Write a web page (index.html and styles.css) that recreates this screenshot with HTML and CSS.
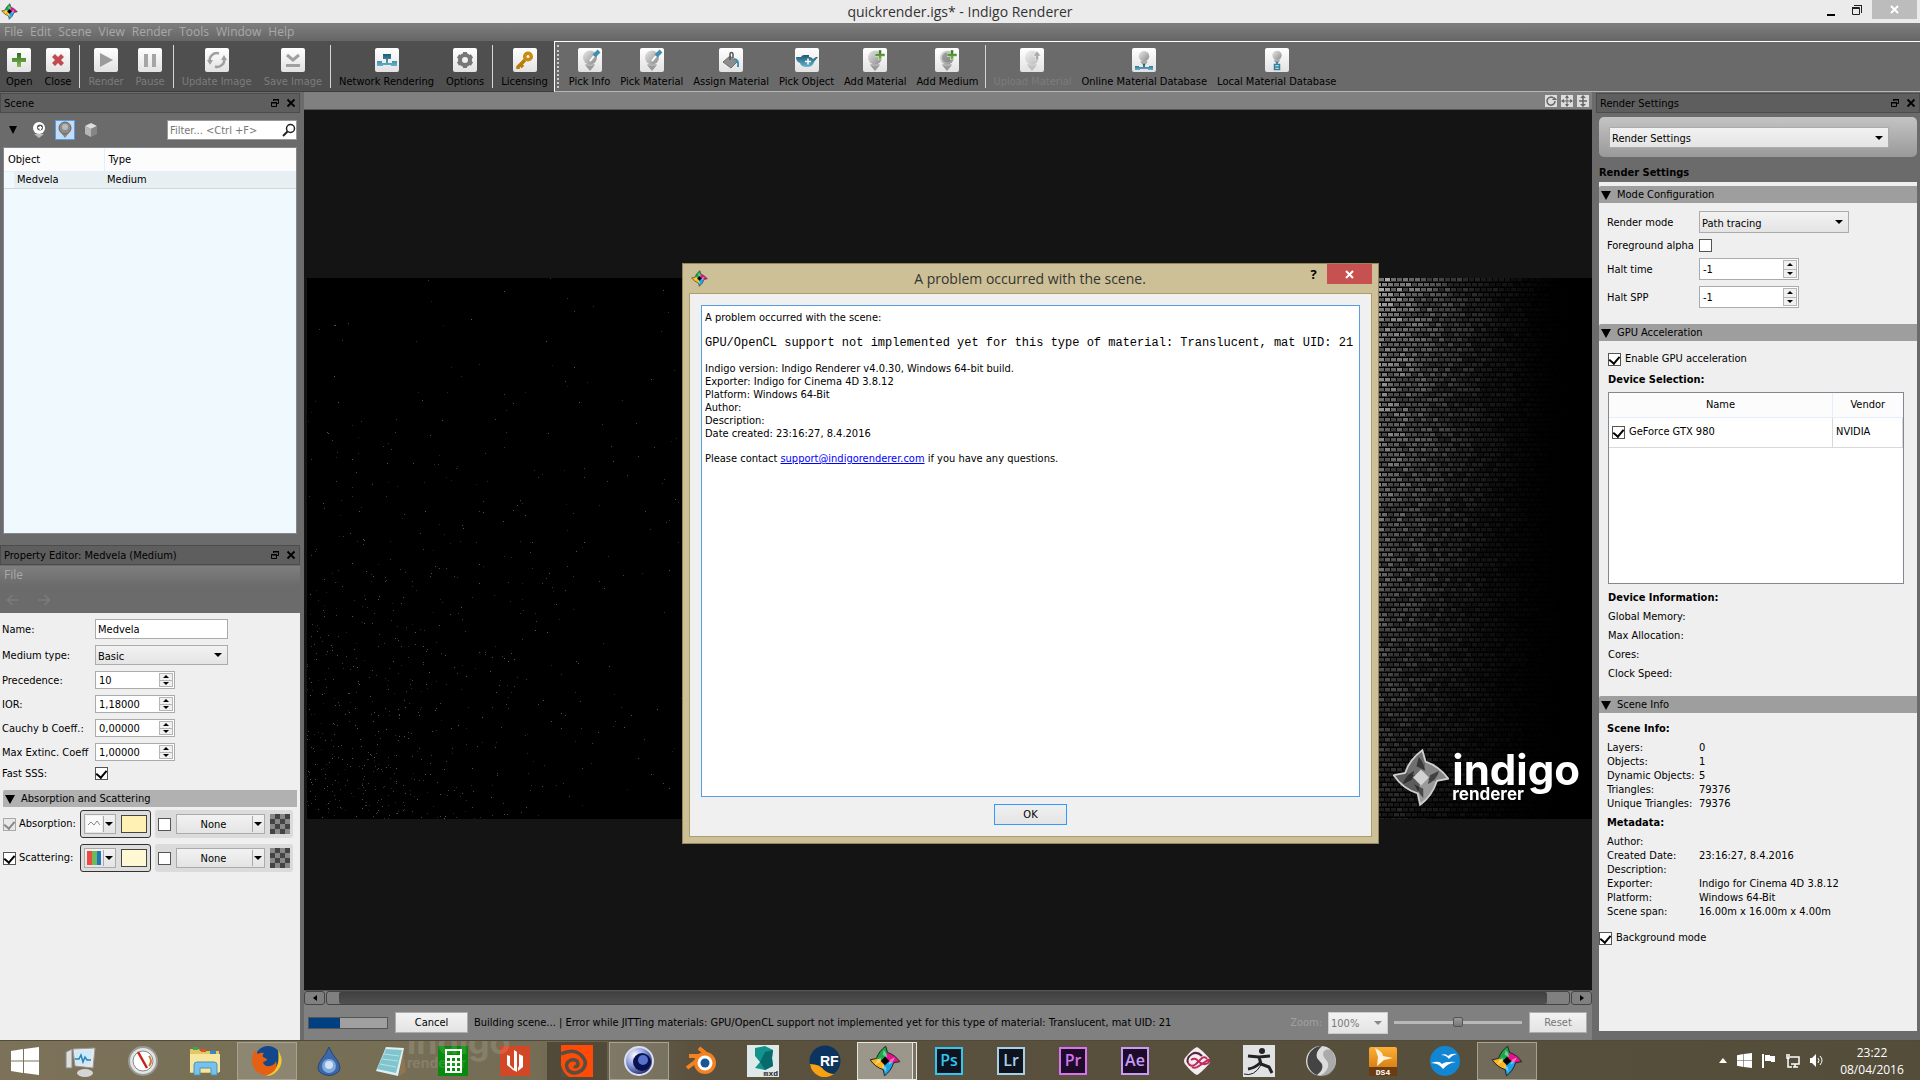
FILE: index.html
```html
<!DOCTYPE html>
<html lang="en">

<head>
    <meta charset="UTF-8" />
    <title>quickrender.igs* - Indigo Renderer</title>
    <link rel="stylesheet" href="styles.css">
</head>

<body>
    <!-- shared icons -->
    <svg class="defs" aria-hidden="true">
        <defs>
            <linearGradient id="grey" x1="0" y1="0" x2="1" y2="1">
                <stop offset="0" stop-color="#e8e8e8" />
                <stop offset="1" stop-color="#8a8a8a" />
            </linearGradient>
            <linearGradient id="blue" x1="0" y1="0" x2="0" y2="1">
                <stop offset="0" stop-color="#1f5a73" />
                <stop offset="1" stop-color="#62b4cf" />
            </linearGradient>
            <linearGradient id="green" x1="0" y1="0" x2="0" y2="1">
                <stop offset="0" stop-color="#2f6b1c" />
                <stop offset="1" stop-color="#86bd58" />
            </linearGradient>
            <linearGradient id="orange" x1="0" y1="0" x2="0" y2="1">
                <stop offset="0" stop-color="#ffae35" />
                <stop offset="1" stop-color="#c86e08" />
            </linearGradient>
            <radialGradient id="orb" cx="0.35" cy="0.3" r="0.8">
                <stop offset="0" stop-color="#ffffff" />
                <stop offset="0.5" stop-color="#7f93d8" />
                <stop offset="1" stop-color="#10144a" />
            </radialGradient>
        </defs>
        <symbol id="mark" viewBox="0 -1 24 26">
            <path class="mark-a" d="M12.6 0Q7 4 5 10L12 12 14 5Z" />
            <path class="mark-b" d="M14 5Q20 7 24 12.5L19 13.5 12 12Z" />
            <path class="mark-c" d="M19 13.500Q17 20 11.600 24L10.500 19 12 12Z" />
            <path class="mark-d" d="M10.500 19Q4 17 0 11L5 10 12 12Z" />
            <path class="mark-tip" d="M11 3Q13 5 14 9L10 7ZM20 9Q19 13 15 15L16 11ZM13 21Q11 19 9 15L13 17ZM4 15Q5 11 9 9L8 13Z" />
            <path class="mark-e" d="M12 8.500L15.500 12 12 15.500 8.500 12Z" />
            <path class="mark-line" d="M12.600 0L14 5Q20 7 24 12.500L19 13.500Q17 20 11.600 24L10.500 19Q4 17 0 11L5 10Q7 4 12.600 0Z" />
        </symbol>
        <symbol id="ball" viewBox="0 0 24 24">
            <path fill="#b5b5b5" d="M7 16h10l-5 6z" />
            <circle cx="12" cy="9.500" r="7" fill="url(#grey)" />
            <path fill="#9a9a9a" d="M7 17l3 1h4l3-1-5 6z" />
        </symbol>
        <symbol id="plus" viewBox="0 0 10 10">
            <path fill="url(#green)" stroke="#fff" stroke-width="0.500" d="M3.500 0h3v3.500H10v3H6.500V10h-3V6.500H0v-3h3.500z" />
        </symbol>
        <symbol id="win" viewBox="0 0 28 28">
            <path fill="#fff" d="M0 4l12-2v11.500H0zM13 2L28 0v13.500H13zM0 14.500h12V26L0 24zM13 14.500h15V28l-15-2z" />
        </symbol>
        <symbol id="restore" viewBox="0 0 10 10">
            <path fill="none" stroke="#000" d="M3.500 3V1.500h5v4H7M1.500 4.500h5v4h-5z" />
            <path d="M3 1h6v1.500H3zM1 4h6v1.500H1z" />
        </symbol>
        <symbol id="cross" viewBox="0 0 10 10">
            <path fill="none" stroke="#000" stroke-width="1.800" d="M1.500 1.500l7 7M8.500 1.500l-7 7" />
        </symbol>
    </svg>

    <header class="titlebar">
        <svg class="mark app-mark" width="17" height="17"><use href="#mark" /></svg>
        <h1>quickrender.igs* - Indigo Renderer</h1>
        <div class="win-buttons">
            <button aria-label="Minimize"><svg width="10" height="14"><path d="M1 11h8v2H1z" /></svg></button>
            <button aria-label="Restore"><svg width="12" height="12"><path fill="none" stroke="#222" d="M1 3.500h7.500v7H1.500v-7M1 4.500h7M3 1.500h8M10.500 1v8" /></svg></button>
            <button class="win-close" aria-label="Close"><svg width="10" height="10"><path fill="none" stroke="#fff" stroke-width="2" d="M1 1l7 7M8 1l-7 7" /></svg></button>
        </div>
    </header>

    <nav class="menubar">
        <a href="#">File</a>
        <a href="#">Edit</a>
        <a href="#">Scene</a>
        <a href="#">View</a>
        <a href="#">Render</a>
        <a href="#">Tools</a>
        <a href="#">Window</a>
        <a href="#">Help</a>
    </nav>

    <div class="toolbars">
        <div class="toolbar main-tools">
            <button class="tool">
                <svg viewBox="0 0 24 24"><path fill="url(#green)" d="M10 5h4v5h5v4h-5v5h-4v-5H5v-4h5z" /></svg>
                <span>Open</span>
            </button>
            <button class="tool">
                <svg viewBox="0 0 24 24"><path fill="#bf4a4f" d="M6 9l3-3 3 3 3-3 3 3-3 3 3 3-3 3-3-3-3 3-3-3 3-3z" /></svg>
                <span>Close</span>
            </button>
            <i class="sep"></i>
            <button class="tool" disabled>
                <svg viewBox="0 0 24 24"><path fill="#9b9b9b" d="M6 5l13 7-13 7z" /></svg>
                <span>Render</span>
            </button>
            <button class="tool" disabled>
                <svg viewBox="0 0 24 24"><path fill="#a5a5a5" d="M6 6h4v13H6zM14 6h4v13h-4z" /></svg>
                <span>Pause</span>
            </button>
            <i class="sep"></i>
            <button class="tool" disabled>
                <svg viewBox="0 0 24 24"><path fill="none" stroke="#a0a0a0" stroke-width="2.500" d="M5 14a7 7 0 0 1 9-8.500M19 10a7 7 0 0 1-9 8.500" /><path fill="#a0a0a0" d="M2 12h6l-3 5zM16 12h6l-3-5z" /></svg>
                <span>Update Image</span>
            </button>
            <button class="tool" disabled>
                <svg viewBox="0 0 24 24"><path fill="none" stroke="#a0a0a0" stroke-width="3" d="M6 7l6 5 6-5M5 17.500h14" /></svg>
                <span>Save Image</span>
            </button>
            <i class="sep"></i>
            <button class="tool">
                <svg viewBox="0 0 24 24"><path fill="url(#blue)" d="M8 6h8v5h-3v4h4v-2h5v5h-6v-1H8v1H2v-5h5v2h4v-4H8z" /></svg>
                <span>Network Rendering</span>
            </button>
            <button class="tool">
                <svg viewBox="0 0 24 24"><circle cx="12" cy="12" r="5" fill="none" stroke="#777" stroke-width="4" /><path stroke="#777" stroke-width="4" d="M12 4v3M12 17v3M5 8l3 2M16 14l3 2M5 16l3-2M16 10l3-2" /></svg>
                <span>Options</span>
            </button>
            <i class="sep"></i>
            <button class="tool">
                <svg viewBox="0 0 24 24"><path fill="none" stroke="#b87c07" stroke-width="3.500" d="M12 12L5 19v2M8 17l2 2" /><circle cx="15" cy="8.500" r="3.300" fill="none" stroke="#c98b12" stroke-width="3.500" /></svg>
                <span>Licensing</span>
            </button>
        </div>
        <div class="toolbar material-tools">
            <i class="grip"></i>
            <button class="tool">
                <svg viewBox="0 0 24 24"><use href="#ball" /><path stroke="#3f8fae" stroke-width="4" d="M16 8l5-5" /><path stroke="#fff" stroke-width="2" d="M12 13l4-5" /></svg>
                <span>Pick Info</span>
            </button>
            <button class="tool">
                <svg viewBox="0 0 24 24"><use href="#ball" /><path stroke="#3f8fae" stroke-width="4" d="M16 8l5-5" /><path stroke="#fff" stroke-width="2" d="M12 13l4-5" /></svg>
                <span>Pick Material</span>
            </button>
            <button class="tool">
                <svg viewBox="0 0 24 24"><path fill="#8d8d8d" stroke="#6f6f6f" d="M11 8l7 6-6 6-8-6z" /><path fill="none" stroke="#555" stroke-width="1.500" d="M11 12V6a1.500 1.500 0 0 1 3 0v4" /><path fill="none" stroke="#3f8fae" stroke-width="2" d="M15 11q5 0 4 8" /></svg>
                <span>Assign Material</span>
            </button>
            <button class="tool">
                <svg viewBox="0 0 24 24"><path fill="url(#blue)" d="M9 7h5v2q3 0 4 2l3-2h2l-4 5q-1 5-7 5-6 0-7-4-4-1-4-6h5q1-2 3-2z" /><path stroke="#fff" stroke-width="1.500" d="M10 13.500h6M13 10.500v6" /></svg>
                <span>Pick Object</span>
            </button>
            <button class="tool">
                <svg viewBox="0 0 24 24"><use href="#ball" /><use href="#plus" x="12" y="2" width="10" height="10" /></svg>
                <span>Add Material</span>
            </button>
            <button class="tool">
                <svg viewBox="0 0 24 24"><use href="#ball" /><circle cx="12" cy="9.500" r="5" fill="#7b7b7b" opacity="0.600" /><use href="#plus" x="12" y="2" width="10" height="10" /></svg>
                <span>Add Medium</span>
            </button>
            <i class="sep"></i>
            <button class="tool" disabled>
                <svg viewBox="0 0 24 24"><use href="#ball" opacity="0.500" /><path fill="#aaa" stroke="#fff" stroke-width="0.500" d="M17 3l4 5h-2.500v4h-3V8H13z" /></svg>
                <span>Upload Material</span>
            </button>
            <button class="tool">
                <svg viewBox="0 0 24 24"><use href="#ball" x="3" y="1" width="18" height="18" /><path fill="url(#blue)" d="M11 16h2v3h4v-1h4v4h-5v-1H8v1H3v-4h4v1h4z" /></svg>
                <span>Online Material Database</span>
            </button>
            <button class="tool">
                <svg viewBox="0 0 24 24"><use href="#ball" x="4" y="1" width="16" height="16" /><path fill="none" stroke="#2f829f" stroke-width="1.500" d="M12 14v2M9.500 16.500h5v5h-5zM9.500 19h5" /></svg>
                <span>Local Material Database</span>
            </button>
        </div>
    </div>

    <main class="workspace">
        <aside class="dock left-dock">
            <section class="scene-panel">
                <div class="dock-title">
                    <h2>Scene</h2>
                    <button aria-label="Float"><svg width="10" height="10"><use href="#restore" /></svg></button>
                    <button aria-label="Close"><svg width="10" height="10"><use href="#cross" /></svg></button>
                </div>
                <div class="scene-tools">
                    <button aria-label="Expand"><svg width="8" height="8"><path d="M0 0h8L4 8z" /></svg></button>
                    <button aria-label="Materials"><svg width="18" height="18" viewBox="0 0 18 18"><path fill="#bbb" d="M4 13h10l-5 4z" /><circle cx="9" cy="7" r="6" fill="#fff" /><circle cx="10" cy="6.500" r="3" fill="#555" /><path fill="#fff" d="M9.500 5h1.500v4H9.500zM8 6h4v1.500H8z" /></svg></button>
                    <button class="on" aria-label="Media"><svg width="18" height="18" viewBox="0 0 18 18"><path fill="#888" d="M3 9h12l-6 8z" /><circle cx="9" cy="7" r="6" fill="#8d8d8d" stroke="#666" /><circle cx="9" cy="6" r="3" fill="#bbb" /></svg></button>
                    <button aria-label="Objects"><svg width="18" height="18" viewBox="0 0 18 18"><path fill="#ddd" d="M3 5l6-3 6 3-6 3z" /><path fill="#b5b5b5" d="M3 5l6 3v8l-6-3z" /><path fill="#858585" d="M15 5L9 8v8l6-3z" /></svg></button>
                    <label class="filter">
                        <input type="text" placeholder="Filter... &lt;Ctrl +F&gt;" aria-label="Filter" />
                        <svg width="14" height="14" viewBox="0 0 14 14"><circle cx="8.500" cy="5.500" r="4" fill="none" stroke="#222" stroke-width="1.500" /><path stroke="#222" stroke-width="2" d="M5.500 8.500L1 13" /></svg>
                    </label>
                </div>
                <div class="tree">
                    <table>
                        <thead>
                            <tr><th>Object</th><th>Type</th></tr>
                        </thead>
                        <tbody>
                            <tr><td>Medvela</td><td>Medium</td></tr>
                        </tbody>
                    </table>
                </div>
            </section>

            <section class="property-panel">
                <div class="dock-title">
                    <h2>Property Editor: Medvela (Medium)</h2>
                    <button aria-label="Float"><svg width="10" height="10"><use href="#restore" /></svg></button>
                    <button aria-label="Close"><svg width="10" height="10"><use href="#cross" /></svg></button>
                </div>
                <div class="property-menu"><a href="#">File</a></div>
                <div class="history">
                    <button aria-label="Back" disabled><svg width="13" height="12"><path fill="none" stroke="#7c7c7c" stroke-width="1.500" d="M13 6H1.500M6.500 1l-5 5 5 5" /></svg></button>
                    <button aria-label="Forward" disabled><svg width="13" height="12"><path fill="none" stroke="#7c7c7c" stroke-width="1.500" d="M0 6h11.500M6.500 1l5 5-5 5" /></svg></button>
                </div>
                <div class="property-body">
                    <div class="property-form">
                        <label for="name">Name:</label>
                        <input id="name" class="field wide" type="text" value="Medvela" />
                        <label for="medium-type">Medium type:</label>
                        <span class="select wide"><select id="medium-type"><option>Basic</option></select></span>
                        <label for="precedence">Precedence:</label>
                        <span class="spin"><input id="precedence" type="text" value="10" /><span><button aria-label="Up"></button><button aria-label="Down"></button></span></span>
                        <label for="ior">IOR:</label>
                        <span class="spin"><input id="ior" type="text" value="1,18000" /><span><button aria-label="Up"></button><button aria-label="Down"></button></span></span>
                        <label for="cauchy">Cauchy b Coeff.:</label>
                        <span class="spin"><input id="cauchy" type="text" value="0,00000" /><span><button aria-label="Up"></button><button aria-label="Down"></button></span></span>
                        <label for="extinction">Max Extinc. Coeff</label>
                        <span class="spin"><input id="extinction" type="text" value="1,00000" /><span><button aria-label="Up"></button><button aria-label="Down"></button></span></span>
                        <label for="fast-sss">Fast SSS:</label>
                        <input id="fast-sss" type="checkbox" checked />
                    </div>
                    <h3 class="group-title">Absorption and Scattering</h3>
                    <div class="channel">
                        <label><input type="checkbox" checked disabled />Absorption:</label>
                        <div class="colour-box">
                            <button class="split" aria-label="Spectrum type"><svg width="16" height="16"><rect width="16" height="16" fill="#fafafa" /><path fill="none" stroke="#888" d="M2 9l3-3 3 3 3-4 3 4" /></svg></button>
                            <button class="swatch absorption" aria-label="Colour"></button>
                        </div>
                        <div class="texture-box">
                            <input type="checkbox" aria-label="Use texture" />
                            <button class="split none">None</button>
                            <span class="checker"></span>
                        </div>
                    </div>
                    <div class="channel">
                        <label><input type="checkbox" checked />Scattering:</label>
                        <div class="colour-box">
                            <button class="split" aria-label="Spectrum type"><svg width="16" height="16"><path fill="#ee4b40" d="M1 1h5v14H1z" /><path fill="#6dbb58" d="M6 1h5v14H6z" /><path fill="#1f76bd" d="M11 1h4v14h-4z" /></svg></button>
                            <button class="swatch scattering" aria-label="Colour"></button>
                        </div>
                        <div class="texture-box">
                            <input type="checkbox" aria-label="Use texture" />
                            <button class="split none">None</button>
                            <span class="checker"></span>
                        </div>
                    </div>
                </div>
            </section>
        </aside>

        <section class="center">
            <div class="view-bar">
                <button aria-label="Rotate"><svg width="12" height="12"><path fill="none" stroke="#666" stroke-width="1.500" d="M8.500 3A4 4 0 1 0 10 6" /><path fill="#666" d="M7 5h5L9.500 2z" /></svg></button>
                <button aria-label="Pan"><svg width="12" height="12"><path stroke="#666" d="M6 1v10M1 6h10" /><path fill="#666" d="M6 0l2 3H4zM6 12l2-3H4zM0 6l3-2v4zM12 6L9 4v4z" /></svg></button>
                <button aria-label="Dolly"><svg width="12" height="12"><path stroke="#666" stroke-width="1.500" d="M6 1v10M2 6h8" /><path fill="#666" d="M6 0l3 3H3zM6 12l3-3H3z" /></svg></button>
            </div>
            <div class="viewport">
                <div class="render">
                    <canvas id="render"></canvas>
                    <div class="watermark">
                        <svg class="mark mark-grey" width="56" height="59"><use href="#mark" /></svg>
                        <p>indigo<small>renderer</small></p>
                    </div>
                </div>
            </div>
            <div class="scrollbar">
                <button class="scroll-left" aria-label="Scroll left"></button>
                <div class="track"><div class="handle"></div></div>
                <button class="scroll-right" aria-label="Scroll right"></button>
            </div>
            <div class="statusbar">
                <div class="progress"><div class="progress-fill"></div></div>
                <button class="btn cancel">Cancel</button>
                <p>Building scene... | Error while JITTing materials: GPU/OpenCL support not implemented yet for this type of material: Translucent, mat UID: 21</p>
                <label class="zoom-label" for="zoom">Zoom:</label>
                <span class="select zoom"><select id="zoom" disabled><option>100%</option></select></span>
                <input class="slider" type="range" value="50" aria-label="Zoom" />
                <button class="btn reset" disabled>Reset</button>
            </div>
        </section>

        <aside class="dock right-dock">
            <div class="dock-title">
                <h2>Render Settings</h2>
                <button aria-label="Float"><svg width="10" height="10"><use href="#restore" /></svg></button>
                <button aria-label="Close"><svg width="10" height="10"><use href="#cross" /></svg></button>
            </div>
            <div class="picker">
                <span class="select"><select aria-label="Settings page"><option>Render Settings</option></select></span>
            </div>
            <h2 class="page-title">Render Settings</h2>
            <div class="settings">
                <h3 class="group-title">Mode Configuration</h3>
                <div class="mode-form">
                    <label for="mode">Render mode</label>
                    <span class="select mode"><select id="mode"><option>Path tracing</option></select></span>
                    <label for="alpha">Foreground alpha</label>
                    <input id="alpha" type="checkbox" />
                    <label for="halt-time">Halt time</label>
                    <span class="spin tall"><input id="halt-time" type="text" value="-1" /><span><button aria-label="Up"></button><button aria-label="Down"></button></span></span>
                    <label for="halt-spp">Halt SPP</label>
                    <span class="spin tall"><input id="halt-spp" type="text" value="-1" /><span><button aria-label="Up"></button><button aria-label="Down"></button></span></span>
                </div>

                <h3 class="group-title">GPU Acceleration</h3>
                <div class="gpu">
                    <label class="check"><input type="checkbox" checked />Enable GPU acceleration</label>
                    <h4>Device Selection:</h4>
                    <div class="devices">
                        <table>
                            <thead>
                                <tr><th>Name</th><th>Vendor</th></tr>
                            </thead>
                            <tbody>
                                <tr>
                                    <td><label class="check"><input type="checkbox" checked />GeForce GTX 980</label></td>
                                    <td>NVIDIA</td>
                                </tr>
                            </tbody>
                        </table>
                    </div>
                    <h4>Device Information:</h4>
                    <ul>
                        <li>Global Memory:</li>
                        <li>Max Allocation:</li>
                        <li>Cores:</li>
                        <li>Clock Speed:</li>
                    </ul>
                </div>

                <h3 class="group-title">Scene Info</h3>
                <div class="info">
                    <h4>Scene Info:</h4>
                    <dl>
                        <dt>Layers:</dt><dd>0</dd>
                        <dt>Objects:</dt><dd>1</dd>
                        <dt>Dynamic Objects:</dt><dd>5</dd>
                        <dt>Triangles:</dt><dd>79376</dd>
                        <dt>Unique Triangles:</dt><dd>79376</dd>
                    </dl>
                    <h4>Metadata:</h4>
                    <dl>
                        <dt>Author:</dt><dd></dd>
                        <dt>Created Date:</dt><dd>23:16:27, 8.4.2016</dd>
                        <dt>Description:</dt><dd></dd>
                        <dt>Exporter:</dt><dd>Indigo for Cinema 4D 3.8.12</dd>
                        <dt>Platform:</dt><dd>Windows 64-Bit</dd>
                        <dt>Scene span:</dt><dd>16.00m x 16.00m x 4.00m</dd>
                    </dl>
                </div>
                <label class="check background"><input type="checkbox" checked />Background mode</label>
            </div>
        </aside>
    </main>

    <footer class="taskbar">
        <div class="see-through" aria-hidden="true">indigo<small>renderer</small></div>
        <button class="start" aria-label="Start"><svg width="28" height="28"><use href="#win" /></svg></button>
        <div class="tasks">
            <button aria-label="Task Manager"><svg viewBox="0 0 32 32"><path fill="#ddd" stroke="#888" d="M1 7l6-3v19H1z" /><path fill="#e8e8e8" stroke="#999" d="M8 4l22-1-2 20-18-2z" /><path fill="#cfe9f8" d="M10 6l17-1-2 15-14-1z" /><path fill="none" stroke="#2783b8" stroke-width="1.500" d="M10 14h4l2-4 2 7 2-5 2 3h4" /><ellipse cx="20" cy="28" rx="8" ry="4" fill="#d5d5d5" /></svg></button>
            <button aria-label="Gauge"><svg viewBox="0 0 32 32"><circle cx="16" cy="16" r="14" fill="#e4e4e2" stroke="#999" stroke-width="2" /><circle cx="16" cy="16" r="10" fill="#fff" stroke="#888" /><path stroke="#c4231a" stroke-width="2.500" d="M11 7l9 16" /><path fill="none" stroke="#c77b37" stroke-width="2" d="M22 11q4 5 0 10" /></svg></button>
            <button aria-label="File Explorer"><svg viewBox="0 0 32 32"><path fill="#e6c661" d="M1 4h9l1 2h19v22H1z" /><path fill="#f7e6a0" d="M1 9h30v18H1z" /><path fill="#3aa657" d="M4 2h5v3H4z" /><path fill="#d9532c" d="M12 4h5v3h-5z" /><path fill="#3488cf" d="M21 6h6v3h-6z" /><path fill="#79c1e8" stroke="#4594c4" d="M5 30V20q0-3 3-3h17q3 0 3 3v10h-6v-7H11v7z" /></svg></button>
            <button class="open" aria-label="Firefox"><svg viewBox="0 0 32 32"><circle cx="17" cy="14" r="13" fill="#12478c" /><path fill="#f4c828" d="M27 5q6 9 2 17-5 9-14 9 10-5 12-13 1-7 0-13z" /><path fill="#e66014" d="M4 5l3 4q3-2 6-1-2 2-1 4l4 2q0 2-4 3 1 5 7 4 5-1 6-5 2 7-3 11-6 5-13 2-7-4-8-12Q1 9 4 5z" /></svg></button>
            <button aria-label="Drop"><svg viewBox="0 0 32 32"><path fill="#3c68a8" stroke="#24477c" d="M16 2q3 7 8 13 6 9 0 13-8 5-16 0-6-4 0-13 5-6 8-13z" /><circle cx="16" cy="21" r="7" fill="#80aade" /><circle cx="16" cy="20" r="4" fill="#d1e2f5" /></svg></button>
            <button aria-label="Notepad"><svg viewBox="0 0 32 32"><path fill="#8d7650" d="M28 4l3 23-7 4z" /><path fill="#dff0f2" d="M11 2l18 1-6 28L1 26z" /><path fill="#80c5cd" d="M11 4l16 1-6 23L2 24z" /><path stroke="#b5e2e6" d="M9 9l15 2M7 14l16 2M5 19l16 3" /></svg></button>
            <button aria-label="Calculator"><svg viewBox="0 0 32 32"><path fill="#078b0c" d="M1 1h30v30H1z" /><path fill="#fff" d="M8 4h17v24H8z" /><path fill="#078b0c" d="M10 6h13v4H10zM10 13h3v3h-3zM15 13h3v3h-3zM20 13h3v3h-3zM10 18h3v3h-3zM15 18h3v3h-3zM20 18h3v3h-3zM10 23h3v3h-3zM15 23h3v3h-3zM20 23h3v3h-3z" /></svg></button>
            <button aria-label="Reader"><svg viewBox="0 0 32 32"><path fill="#d24726" d="M1 1h30v30H1z" /><path fill="#fff" d="M8 10l3 1v9l4 4V5l3 2v20l-4-2-6-5zM20 9l4 2v11l-5 4v-3l1-2z" /></svg></button>
            <button class="shade" aria-label="Houdini"><svg viewBox="0 0 32 32"><path fill="#ff4a08" d="M0 0h32v32H0z" /><path fill="none" stroke="#544f40" stroke-width="3.500" d="M0 9q12-6 20 1 8 8 1 15-8 6-14 0-4-7 3-10 7-1 7 4-1 4-4 2" /><path fill="#544f40" d="M0 20q2 8 8 12H0z" /></svg></button>
            <button class="open" aria-label="Cinema 4D"><svg viewBox="0 0 32 32"><circle cx="16" cy="16" r="14" fill="url(#orb)" stroke="#dcdff0" stroke-width="2" /><circle cx="19" cy="17" r="9" fill="#0b1250" /><circle cx="20" cy="15" r="5" fill="#5871cc" /></svg></button>
            <button aria-label="Blender"><svg viewBox="0 0 32 32"><path fill="none" stroke="#f58220" stroke-width="4" d="M14 3l11 9M4 11h16M2 23l12-9" /><circle cx="20" cy="18" r="11" fill="#f58220" /><circle cx="20" cy="18" r="7.500" fill="#fff" /><circle cx="20" cy="18" r="4.500" fill="#1a5694" /></svg></button>
            <button aria-label="Max"><svg viewBox="0 0 32 32"><path fill="#dfe9ea" d="M0 0h32v32H0z" /><path fill="#12948c" d="M8 3l10-2 8 4-1 8 1 8-8 4-10-2 5-6-5-6z" /><path fill="#076a6b" d="M18 7l8-2-1 8 1 8-8 4-5-8z" /><text x="31" y="31" text-anchor="end" class="icon-tiny">mxd</text></svg></button>
            <button aria-label="RealFlow"><svg viewBox="0 0 32 32"><circle cx="16" cy="16" r="15.500" fill="#0b355f" /><path fill="#f9a110" d="M1 19q10 0 14 6 5 4 10 4-7 5-15 2-8-4-9-12z" /><text x="11" y="21" class="icon-rf">RF</text></svg></button>
            <button class="active" aria-label="Indigo Renderer"><svg class="mark"><use href="#mark" /></svg></button>
            <button class="adobe ps" aria-label="Photoshop"><b>Ps</b></button>
            <button class="adobe lr" aria-label="Lightroom"><b>Lr</b></button>
            <button class="adobe pr" aria-label="Premiere"><b>Pr</b></button>
            <button class="adobe ae" aria-label="After Effects"><b>Ae</b></button>
            <button aria-label="Knot"><svg viewBox="0 0 32 32"><path fill="#f2eeee" d="M16 2q4 2 12 11 2 3 0 6-8 9-12 11-5-2-12-11-2-3 0-6 7-9 12-11z" /><path fill="none" stroke="#5b2545" stroke-width="2" d="M21 11q-5-5-10-2-6 4-4 9" /><path fill="none" stroke="#c02a5c" stroke-width="2" d="M7 18q3 5 8 1l6-6q3-2 5 1M10 15q4-3 7 1 5 5 10 2 3-4 0-3l-9 6q-4 3-7 1" /></svg></button>
            <button aria-label="ZBrush"><svg viewBox="0 0 32 32"><path fill="#e1e2e4" d="M0 0h32v32H0z" /><circle cx="19" cy="6" r="3" fill="#222" /><path fill="none" stroke="#222" stroke-width="3" d="M5 11l11 1 11-1M16 12l2 7 8 3 3 6M17 18q-5 5-12 6" /><path fill="none" stroke="#222" d="M1 29q10 3 17-9" /></svg></button>
            <button aria-label="Silo"><svg viewBox="0 0 32 32"><circle cx="16" cy="16" r="15" fill="#dcdcdc" /><path fill="#444" d="M17 1A15 15 0 0 0 12 30q7-5 5-11l-5-6q-2-6 5-12z" /><path fill="#777" d="M26 5q-7-2-8 4 0 3 4 7 3 5-1 10-3 4-7 5 8 2 13-4 8-10-1-22z" opacity="0.500" /></svg></button>
            <button aria-label="Daz Studio"><svg viewBox="0 0 32 32"><rect x="2" y="2" width="28" height="29" rx="2" fill="url(#orange)" /><path fill="#6b3c10" d="M2 22h28v9H2z" /><path fill="#fff3dc" d="M8 3q8 4 8 8l10 2-9 2-7 6 1-9z" /><text x="16" y="30" text-anchor="middle" class="icon-tiny light">DS4</text></svg></button>
            <button aria-label="OpenOffice"><svg viewBox="0 0 32 32"><circle cx="16" cy="16" r="15" fill="#1286d2" /><path fill="#fff" d="M12 10q5-2 7 1 3-3 9-2-5 1-8 5-3-4-8-4zM2 18q8-3 11 1 4-3 14-2-8 1-13 7-4-6-12-6z" /></svg></button>
            <button class="open" aria-label="Indigo Renderer"><svg class="mark"><use href="#mark" /></svg></button>
        </div>
        <div class="tray">
            <svg width="9" height="5"><path fill="#fff" d="M0 5h8L4 0z" /></svg>
            <svg width="15" height="15"><use href="#win" /></svg>
            <svg width="15" height="15"><path fill="#fff" d="M1 1h2v14H1zM4 2h5v1h5v6h-4V8H4z" /></svg>
            <svg width="15" height="15"><path fill="none" stroke="#fff" stroke-width="1.500" d="M5 4h9v7H6M8 14h5M10 11v3M2 1v4h2V1M3 5v9h4" /></svg>
            <svg width="15" height="15"><path fill="#fff" d="M1 5h2l4-4v13l-4-4H1z" /><path fill="none" stroke="#fff" d="M9 5q2 2 0 5M11 3q4 4 0 9" /></svg>
        </div>
        <time class="clock">23:22<br />08/04/2016</time>
    </footer>

    <!-- error window -->
    <div class="dialog" role="dialog" aria-labelledby="dialog-title">
        <div class="dialog-title">
            <svg class="mark" width="17" height="17"><use href="#mark" /></svg>
            <h2 id="dialog-title">A problem occurred with the scene.</h2>
            <button class="help">?</button>
            <button class="close" aria-label="Close"><svg width="9" height="9"><path fill="none" stroke="#fff" stroke-width="2" d="M1 1l7 7M8 1L1 8" /></svg></button>
        </div>
        <div class="dialog-body">
            <div class="message">
                <p>A problem occurred with the scene:</p>
                <pre>GPU/OpenCL support not implemented yet for this type of material: Translucent, mat UID: 21</pre>
                <p>Indigo version: Indigo Renderer v4.0.30, Windows 64-bit build.<br />
                    Exporter: Indigo for Cinema 4D 3.8.12<br />
                    Platform: Windows 64-Bit<br />
                    Author:<br />
                    Description:<br />
                    Date created: 23:16:27, 8.4.2016</p>
                <p>Please contact <a href="mailto:support@indigorenderer.com">support@indigorenderer.com</a> if you have any questions.</p>
            </div>
            <button class="ok">OK</button>
        </div>
    </div>

    <script src="render.js"></script>
</body>

</html>
```
FILE: styles.css
```css
* {
    box-sizing: border-box;
    margin: 0;
    padding: 0;
}

body {
    display: flex;
    flex-direction: column;
    height: 100vh;
    overflow: hidden;
    background-color: #6b6b6b;
    color: #000;
    font: 11px/14px Tahoma, "DejaVu Sans Condensed", "Noto Sans", sans-serif;
}

button,
input,
select {
    border: none;
    background: none;
    color: inherit;
    font: inherit;
}

ul {
    list-style: none;
}

a {
    color: inherit;
    text-decoration: none;
}

svg {
    display: block;
    flex: none;
}

.defs {
    position: absolute;
    width: 0;
    height: 0;
}

/* indigo logo colours */
.mark {
    --a: #18a84a;
    --b: #e5128d;
    --c: #1aa5e8;
    --d: #f9b41c;
    --e: #000;
    --tip: rgba(255, 255, 255, 0.4);
    --line: #222;
}

.mark-grey {
    --a: #6f6f6f;
    --b: #858585;
    --c: #9a9a9a;
    --d: #5c5c5c;
    --e: #d2d2d2;
    --tip: rgba(20, 20, 20, 0.6);
    --line: #cfcfcf;
}

.mark-a { fill: var(--a); }
.mark-b { fill: var(--b); }
.mark-c { fill: var(--c); }
.mark-d { fill: var(--d); }
.mark-e { fill: var(--e); }
.mark-tip { fill: var(--tip); }
.mark-line { fill: none; stroke: var(--line); stroke-width: 0.8; }

/* title bar */
.titlebar {
    position: relative;
    display: flex;
    align-items: center;
    height: 23px;
    padding-left: 1px;
    background-color: #ebebeb;
}

.titlebar h1 {
    flex: 1;
    padding-left: 84px;
    color: #333;
    font: 14px/22px "Open Sans", sans-serif;
    text-align: center;
}

.win-buttons {
    display: flex;
    align-self: flex-start;
    padding-right: 3px;
}

.win-buttons button {
    display: flex;
    justify-content: center;
    align-items: center;
    width: 26px;
    height: 19px;
}

.win-buttons .win-close {
    width: 45px;
    margin-left: 2px;
    background-color: #bcbcbc;
}

.menubar {
    display: flex;
    gap: 7px;
    height: 18px;
    padding-left: 4px;
    background: linear-gradient(#7e7e7e, #666);
    color: #a9a9a9;
    font: 12px/18px "Open Sans", sans-serif;
}

/* toolbars */
.toolbars {
    display: flex;
    height: 51px;
}

.toolbar {
    display: flex;
    padding-top: 7px;
}

.main-tools {
    background-color: #4f4f4f;
    border-bottom: 1px solid #3c3c3c;
}

.material-tools {
    flex: 1;
    padding-top: 6px;
    border: 1px solid #fff;
    border-width: 1px 0 1px 1px;
    border-bottom-color: #b5b5b5;
    background-color: #6a6a6a;
}

.tool {
    display: flex;
    flex-direction: column;
    align-items: center;
    padding: 0 6px;
    white-space: nowrap;
}

.material-tools .tool {
    padding: 0 5px;
}

.tool svg {
    width: 24px;
    height: 24px;
    border-radius: 2px;
    background: linear-gradient(#fff, #e2e2e2);
}

.tool span {
    padding-top: 3px;
}

.tool:disabled {
    color: #7c7c7c;
}

.sep {
    width: 1px;
    height: 43px;
    margin: -3px 2px 0;
    background-color: #d5d5d5;
}

.grip {
    width: 2px;
    height: 43px;
    margin: -3px 5px 0 2px;
    border-left: 2px dotted #ccc;
}

/* docks */
.workspace {
    display: flex;
    flex: 1;
    min-height: 0;
}

.dock {
    display: flex;
    flex: none;
    flex-direction: column;
    padding-top: 1px;
    background-color: #6b6b6b;
}

.left-dock {
    width: 304px;
    padding-right: 4px;
}

.right-dock {
    width: 328px;
    padding-left: 4px;
    padding-bottom: 9px;
}

.dock-title {
    display: flex;
    align-items: center;
    gap: 6px;
    height: 20px;
    padding: 0 3px;
    border: 1px solid #4c4c4c;
    background-color: #5e5e5e;
}

.dock-title h2 {
    flex: 1;
    padding-top: 2px;
    font-size: 11px;
    font-weight: normal;
}

.scene-panel {
    display: flex;
    flex-direction: column;
    height: 452px;
}

.scene-tools {
    display: flex;
    align-items: center;
    gap: 8px;
    height: 34px;
    padding: 0 3px 0 9px;
}

.scene-tools button:nth-child(2) {
    margin-left: 5px;
}

.scene-tools .on {
    outline: 1px solid #569de5;
    background-color: #c4dcf5;
}

.filter {
    display: flex;
    align-items: center;
    width: 130px;
    height: 20px;
    margin-left: auto;
    padding: 0 2px;
    border: 1px solid #999;
    background-color: #fff;
}

.filter input {
    width: 112px;
    padding-top: 1px;
}

.filter input::placeholder {
    color: #777;
}

.tree {
    flex: 1;
    margin: 0 3px 11px;
    border: 1px solid #828790;
    background-color: #f0f9fe;
}

table {
    width: 100%;
    border-collapse: collapse;
    table-layout: fixed;
}

th {
    padding-top: 1px;
    font-weight: normal;
    background-color: #fcfcfc;
    border: 1px solid #e6eefb;
    border-width: 0 0 1px 1px;
}

th:first-child {
    border-left: none;
}

.tree th {
    height: 23px;
    padding-left: 4px;
    text-align: left;
}

.tree th:first-child {
    width: 100px;
}

.tree td {
    height: 17px;
    padding-left: 3px;
    background-color: #e8eff2;
    border: 1px solid #d0d8dc;
    border-width: 1px 0;
}

.tree td:first-child {
    padding-left: 13px;
    background: linear-gradient(to right, #f0f9fe 10px, #e8eff2 10px);
}

.property-panel {
    display: flex;
    flex: 1;
    flex-direction: column;
}

.property-menu {
    height: 20px;
    margin-top: 1px;
    padding-left: 4px;
    background: linear-gradient(#7e7e7e, #6b6b6b);
    color: #a9a9a9;
    font: 12px/18px "Open Sans", sans-serif;
}

.history {
    display: flex;
    gap: 19px;
    height: 27px;
    padding: 4px 6px;
}

.property-body {
    flex: 1;
    padding-top: 6px;
    background-color: #efefef;
}

.property-form {
    display: grid;
    grid-template-columns: 93px 1fr;
    gap: 6px 0;
    align-items: center;
    padding-left: 2px;
    line-height: 13px;
    white-space: nowrap;
}

/* fields */
.field {
    height: 20px;
    padding: 1px 2px 0;
    border: 1px solid #ababab;
    background-color: #fff;
}

.wide {
    width: 133px;
}

.select {
    position: relative;
    display: block;
    height: 20px;
    border: 1px solid #acacac;
    background: linear-gradient(#f2f2f2, #e4e4e4);
}

.select select {
    display: block;
    width: 100%;
    height: 100%;
    padding: 2px 0 0 2px;
    appearance: none;
}

.select::after {
    position: absolute;
    top: 50%;
    right: 5px;
    margin-top: -2px;
    border: 4px solid transparent;
    border-top-color: #000;
    border-bottom: none;
    content: "";
}

.spin {
    display: flex;
    width: 80px;
    height: 18px;
    padding: 1px;
    border: 1px solid #ababab;
    background-color: #fff;
}

.spin input {
    flex: 1;
    min-width: 0;
    padding: 1px 0 0 2px;
}

.spin span {
    display: flex;
    flex-direction: column;
    width: 14px;
    border: 1px solid #b5b5b5;
    background-color: #f0f0f0;
}

.spin button {
    display: flex;
    flex: 1;
    justify-content: center;
    align-items: center;
}

.spin button + button {
    border-top: 1px solid #b5b5b5;
}

.spin button::after {
    border: 3px solid transparent;
    border-top: none;
    border-bottom-color: #000;
    content: "";
}

.spin button + button::after {
    border-top: 3px solid #000;
    border-bottom: none;
}

.spin.tall {
    width: 100px;
    height: 22px;
}

input[type="checkbox"] {
    display: flex;
    flex: none;
    justify-content: center;
    width: 13px;
    height: 13px;
    border: 1px solid #555;
    background-color: #fff;
    appearance: none;
}

input[type="checkbox"]:checked::after {
    width: 5px;
    height: 8px;
    border: solid #000;
    border-width: 0 2px 2px 0;
    transform: rotate(40deg);
    content: "";
}

input[type="checkbox"]:disabled {
    border-color: #aaa;
    background-color: #e8e8e8;
}

input[type="checkbox"]:disabled::after {
    border-color: #888;
}

.group-title {
    display: flex;
    align-items: center;
    gap: 6px;
    height: 17px;
    padding: 1px 0 0 2px;
    border-radius: 2px 0 0 0;
    background-color: #9e9e9e;
    font-size: 11px;
    font-weight: normal;
}

.group-title::before {
    border: 5px solid transparent;
    border-top: 9px solid #000;
    border-bottom: none;
    content: "";
}

.property-body .group-title {
    margin: 10px 3px 3px;
    background-color: #b1b1b1;
}

.channel {
    display: flex;
    align-items: center;
    height: 28px;
    margin-bottom: 6px;
    padding-left: 3px;
}

.channel label {
    display: flex;
    align-items: center;
    gap: 3px;
    width: 77px;
}

.colour-box {
    display: flex;
    align-items: center;
    gap: 5px;
    width: 71px;
    height: 28px;
    padding: 0 3px;
    border: 1px solid #333;
    border-radius: 3px;
    background-color: #dedede;
}

.split {
    position: relative;
    display: flex;
    align-items: center;
    width: 33px;
    height: 20px;
    padding: 0 1px;
    border: 1px solid #ababab;
    background: linear-gradient(#f2f2f2, #e4e4e4);
}

.split::after {
    position: absolute;
    top: 7px;
    right: 2px;
    border: 4px solid transparent;
    border-top-color: #000;
    border-bottom: none;
    content: "";
}

.split::before {
    position: absolute;
    top: 1px;
    right: 11px;
    bottom: 1px;
    border-left: 1px solid #aaa;
    content: "";
}

.split.none {
    justify-content: center;
    width: 89px;
    padding: 2px 14px 0 0;
}

.swatch {
    width: 26px;
    height: 18px;
    border: 1px solid #444;
}

.absorption {
    background-color: #fff0b3;
}

.scattering {
    background-color: #fff8d2;
}

.texture-box {
    display: flex;
    align-items: center;
    gap: 5px;
    width: 138px;
    height: 28px;
    margin-left: 4px;
    padding: 0 3px;
    border-radius: 3px;
    background-color: #dbdbdb;
}

.checker {
    width: 20px;
    height: 20px;
    background: conic-gradient(#444 25%, #888 0 50%, #444 0 75%, #888 0) 0 0 / 10px 10px;
}

/* viewport */
.center {
    display: flex;
    flex: 1;
    flex-direction: column;
    min-width: 0;
    background-color: #808080;
}

.view-bar {
    display: flex;
    justify-content: flex-end;
    align-items: center;
    gap: 4px;
    height: 18px;
    padding: 3px 3px 2px 0;
    border-bottom: 1px solid #555;
}

.view-bar button {
    width: 12px;
    height: 12px;
    background-color: #ddd;
}

.viewport {
    display: flex;
    flex: 1;
    align-items: center;
    min-height: 0;
    padding: 0 0 4px 3px;
    background-color: #141414;
}

.render {
    position: relative;
    width: 100%;
    aspect-ratio: 1285 / 541;
    background-color: #000;
}

.render canvas {
    display: block;
    width: 100%;
    height: 100%;
}

.watermark {
    position: absolute;
    right: 12px;
    bottom: 12px;
    display: flex;
    align-items: center;
    gap: 3px;
    color: #fff;
}

.watermark p {
    font: bold 42px/34px Inter, sans-serif;
}

.watermark small {
    display: block;
    font-size: 17px;
    line-height: 14px;
}

.scrollbar {
    display: flex;
    gap: 1px;
    height: 15px;
    border-top: 1px solid #555;
}

.scrollbar button {
    display: flex;
    justify-content: center;
    align-items: center;
    width: 21px;
    border: 1px solid #444;
    border-radius: 3px;
}

.scrollbar button::after {
    border: 3px solid transparent;
    content: "";
}

.scrollbar .scroll-left::after {
    border-right: 4px solid #000;
    border-left: none;
}

.scrollbar .scroll-right::after {
    border-right: none;
    border-left: 4px solid #000;
}

.track {
    flex: 1;
    padding: 0 22px 0 12px;
    border: 1px solid #444;
    border-radius: 3px;
}

.handle {
    height: 100%;
    border-radius: 2px;
    background: linear-gradient(#404040, #505050);
}

.statusbar {
    display: flex;
    align-items: center;
    height: 35px;
    padding: 0 5px 0 4px;
    white-space: nowrap;
}

.statusbar p {
    flex: 1;
    min-width: 0;
    padding: 1px 0 0 6px;
}

.progress {
    width: 80px;
    height: 12px;
    border: 1px solid #555;
    background-color: #a0a0a0;
}

.progress-fill {
    width: 40%;
    height: 100%;
    background-color: #003f80;
}

.btn {
    height: 21px;
    padding-top: 1px;
    border: 1px solid #acacac;
    background: linear-gradient(#f2f2f2, #e4e4e4);
}

.cancel {
    width: 73px;
    margin-left: 7px;
}

.zoom-label {
    color: #a0a0a0;
}

.zoom {
    width: 60px;
    height: 22px;
    margin: 0 6px;
    border-color: #ccc;
    color: #777;
}

.zoom select {
    opacity: 1;
}

.zoom::after {
    border-top-color: #888;
}

.slider {
    width: 128px;
    height: 11px;
    appearance: none;
}

.slider::-webkit-slider-runnable-track {
    height: 3px;
    background-color: #b8b8b8;
}

.slider::-webkit-slider-thumb {
    width: 10px;
    height: 10px;
    margin-top: -4px;
    border: 1px solid #555;
    border-radius: 2px;
    background: linear-gradient(#999, #777);
    appearance: none;
}

.reset {
    width: 58px;
    margin-left: 7px;
    color: #777;
}

/* render settings */
.picker {
    height: 40px;
    margin: 4px 3px 0;
    padding: 10px 28px 0 10px;
    border-radius: 5px;
    background: linear-gradient(#c4c4c4, #999);
}

.picker .select {
    height: 21px;
}

.page-title {
    padding: 9px 3px 2px;
    font-size: 11px;
}

.settings {
    flex: 1;
    margin: 0 3px;
    padding-top: 4px;
    background-color: #efefef;
}

.mode-form {
    display: grid;
    grid-template-columns: 92px 1fr;
    gap: 6px 0;
    align-items: center;
    padding: 8px 8px 16px;
    line-height: 13px;
    white-space: nowrap;
}

.mode {
    width: 150px;
    height: 22px;
}

.check {
    display: flex;
    align-items: center;
    gap: 4px;
}

.settings h4 {
    font-size: 11px;
}

.gpu {
    padding: 11px 13px 15px 9px;
}

.gpu h4 {
    padding-top: 7px;
}

.devices {
    height: 192px;
    margin-top: 5px;
    border: 1px solid #828790;
    background-color: #fff;
}

.devices th {
    height: 24px;
}

.devices th:last-child {
    width: 70px;
}

.devices td {
    height: 30px;
    padding: 0 3px;
    border: 1px solid #d8d8d8;
    border-width: 0 1px 1px 0;
}

.gpu li {
    padding-top: 5px;
}

.info {
    padding: 9px 8px 0;
}

.info h4 {
    padding-bottom: 5px;
}

.info dl {
    display: grid;
    grid-template-columns: 92px 1fr;
    grid-auto-rows: 14px;
    padding-bottom: 5px;
    white-space: nowrap;
}

.background {
    padding-top: 7px;
}

/* taskbar */
.taskbar {
    position: relative;
    display: flex;
    align-items: center;
    height: 40px;
    overflow: hidden;
    border-top: 1px solid #514a38;
    background: linear-gradient(to right, #7b7259, #746c54 28%, #5a523e 36%, #544d3a);
}

.see-through {
    position: absolute;
    top: -14px;
    left: 407px;
    color: #fff;
    font: bold 34px/30px Inter, sans-serif;
    opacity: 0.12;
}

.see-through small {
    display: block;
    font-size: 14px;
    line-height: 12px;
}

.start {
    width: 51px;
    padding-left: 11px;
}

.tasks {
    display: flex;
    gap: 2px;
}

.tasks button {
    display: flex;
    justify-content: center;
    align-items: center;
    width: 60px;
    height: 38px;
}

.tasks svg {
    width: 32px;
    height: 32px;
}

.tasks .open {
    border: 1px solid #a8a292;
    background-color: rgba(255, 255, 255, 0.16);
}

.tasks .active {
    padding-right: 5px;
    border: 1px solid #e8e6e0;
    box-shadow: inset -3px 0 #777262, inset -4px 0 #e8e6e0;
    background-color: rgba(255, 255, 255, 0.4);
}

.tasks .shade {
    background-color: #514a38;
}

.icon-tiny {
    fill: #222;
    font: bold 8px "Liberation Mono", monospace;
}

.icon-tiny.light {
    fill: #fff;
}

.icon-rf {
    fill: #fff;
    font: bold 14px "Liberation Sans", sans-serif;
}

.adobe b {
    width: 28px;
    height: 28px;
    border: 2px solid;
    background-color: #0d1420;
    font: 600 16px/23px "Open Sans", sans-serif;
}

.ps { color: #31c5f0; }
.lr { color: #a9cfe4; }
.pr { color: #d873ef; }
.ae { color: #c79cf5; }

.pr b,
.ae b {
    background-color: #1e0b2a;
}

.tray {
    display: flex;
    align-items: center;
    gap: 9px;
    margin-left: auto;
    margin-right: 16px;
}

.clock {
    width: 64px;
    margin-right: 16px;
    color: #fff;
    font: 12px/17px "Open Sans", sans-serif;
    text-align: center;
}

/* error dialog */
.dialog {
    position: absolute;
    top: 263px;
    left: 682px;
    display: flex;
    flex-direction: column;
    width: 697px;
    height: 581px;
    padding: 0 6px 6px;
    border: 1px solid #91865c;
    background-color: #cdc096;
}

.dialog-title {
    display: flex;
    align-items: center;
    height: 29px;
    padding-left: 2px;
}

.dialog-title h2 {
    flex: 1;
    padding-left: 52px;
    color: #333;
    font: 14px/28px "Open Sans", sans-serif;
    text-align: center;
}

.dialog-title button {
    align-self: flex-start;
    height: 20px;
}

.help {
    width: 27px;
    font: bold 13px/20px "Open Sans", sans-serif;
}

.close {
    display: flex;
    justify-content: center;
    align-items: center;
    width: 45px;
    background-color: #c75050;
}

.dialog-body {
    display: flex;
    flex: 1;
    flex-direction: column;
    align-items: center;
    padding: 11px;
    border: 1px solid #a99d72;
    background-color: #f0f0f0;
}

.message {
    flex: 1;
    align-self: stretch;
    padding: 5px 3px;
    border: 1px solid #569de5;
    background-color: #fff;
    line-height: 13px;
}

.message p,
.message pre {
    margin-bottom: 12px;
}

.message pre {
    font: 12px/14px "Liberation Mono", monospace;
}

.message a {
    color: #00f;
    text-decoration: underline;
}

.ok {
    width: 73px;
    height: 21px;
    margin-top: 7px;
    border: 1px solid #3399ff;
    background: linear-gradient(#f0f0f0, #e4e4e4);
}
```
FILE: render.js
```js
const canvas = document.getElementById("render")
const ctx = canvas.getContext("2d")
const w = canvas.width = canvas.clientWidth
const h = canvas.height = canvas.clientHeight

// seeded random, so every run gives the same grain
let seed = 7

function rand() {
    seed = (seed * 16807) % 2147483647
    return seed / 2147483647
}

function dot(x, y, v) {
    ctx.fillStyle = `rgb(${v}, ${v}, ${v})`
    ctx.fillRect(Math.floor(x), Math.floor(y), 1, 1)
}

// sparse fireflies, denser towards the lower left
for (let i = 0; i < 5000; i++) {
    const x = rand() * w * 0.3
    const y = rand() * h
    const near = Math.pow((1 - x / (w * 0.3)) * (y / h), 2)
    if (rand() < near + 0.03) {
        dot(x, y, 30 + rand() * 60)
    }
}

// lit woven surface on the right, fading out
const start = w * 0.83
const rows = Math.ceil(h / 5)
for (let r = 0; r < rows; r++) {
    const y = r * 5
    for (let x = start - (r % 2) * 3; x < w; x += 6) {
        const t = Math.max(0, x - start) / (w - start)
        const fade = Math.pow(Math.max(0, 1 - t * 1.1), 2) * (1 - y / h * 0.75)
        const v = fade * (90 + rand() * 110)
        ctx.fillStyle = `rgb(${v}, ${v}, ${v})`
        ctx.fillRect(Math.floor(x), y, 5, 3)
        ctx.fillStyle = `rgb(${v * 0.45}, ${v * 0.45}, ${v * 0.45})`
        ctx.fillRect(Math.floor(x), y + 3, 6, 1)
    }
}
```
